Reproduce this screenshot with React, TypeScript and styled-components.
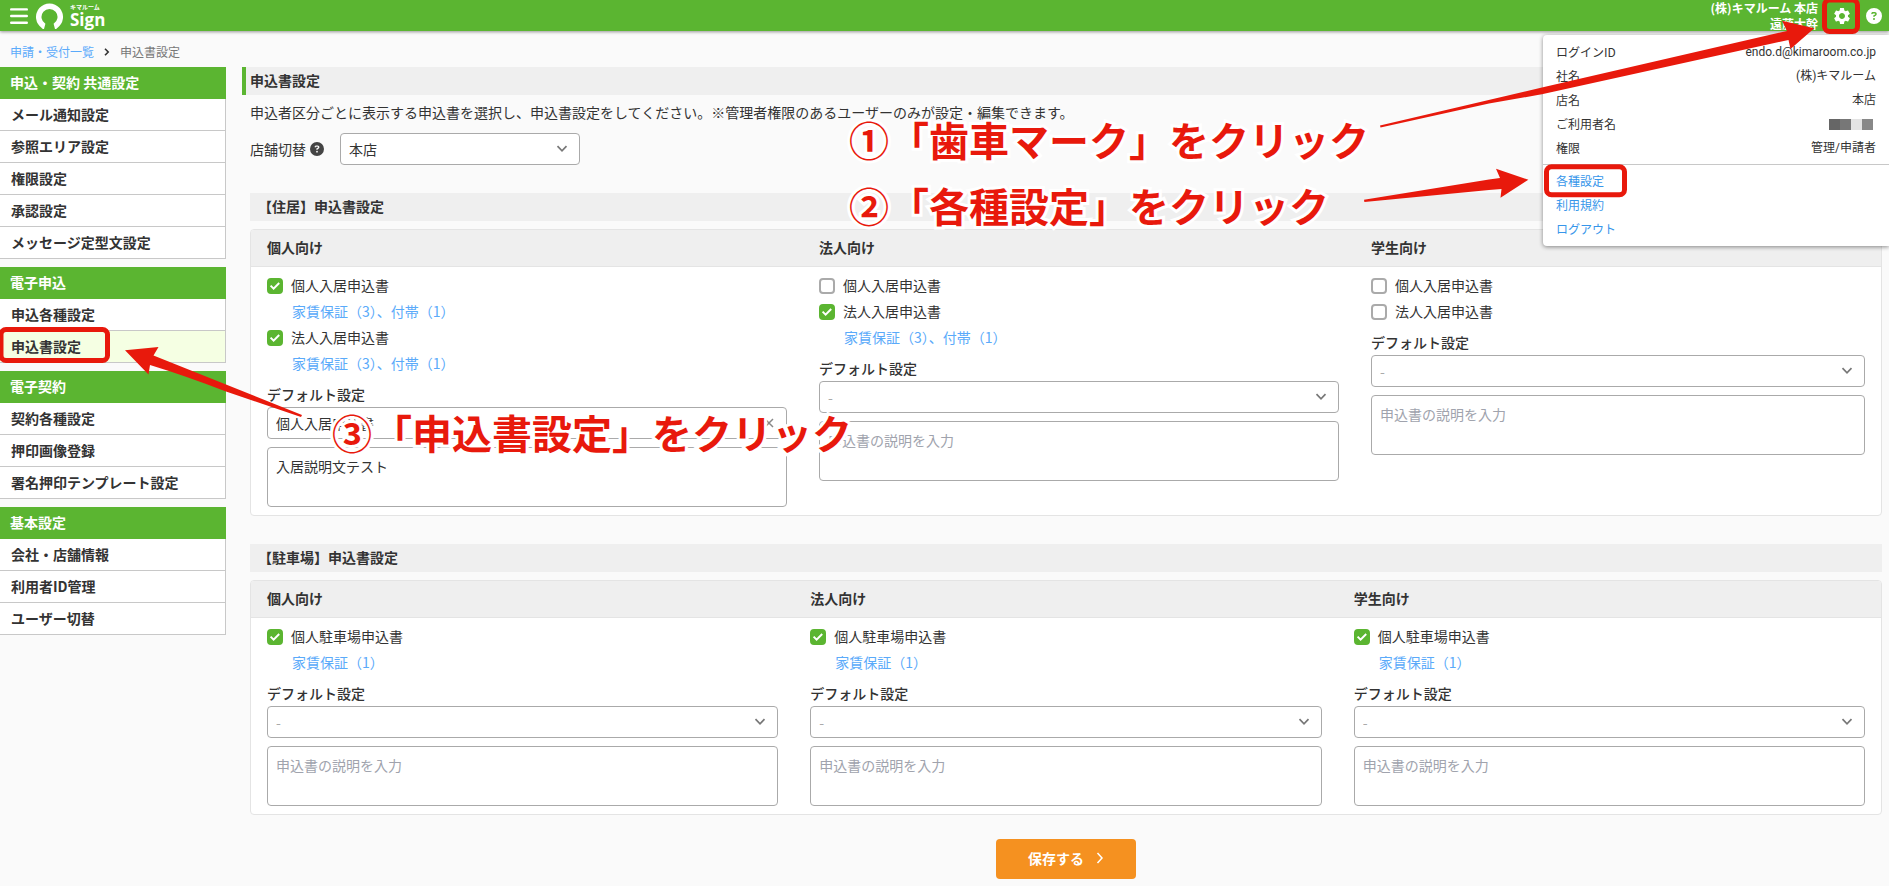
import React, { useId, useState } from "react";
import styled, { createGlobalStyle, css } from "styled-components";
import { MdSettings } from "react-icons/md";
import { FaCircleQuestion } from "react-icons/fa6";

const color = {
  green: "#5bb531",
  red: "#e8190c",
  text: "#333",
  bar: "#efefef",
  page: "#fafafa",
  line: "#c8c8c8",
  card: "#e4e4e4",
  field: "#aaa",
  link: "#5aaafa",
};

const GlobalStyle = createGlobalStyle`
  *, *::before, *::after { box-sizing: border-box; }
  body {
    margin: 0;
    background: ${color.page};
    color: ${color.text};
    font: 14px/20px "Noto Sans CJK JP", "Noto Sans", sans-serif;
  }
  button, select, textarea, input { font: inherit; color: inherit; margin: 0; }
  a { text-decoration: none; }
  h1, h2, h3, ul, dl, dd, p { margin: 0; padding: 0; }
  ul { list-style: none; }
`;

const Page = styled.div`
  position: relative;
  min-height: 100vh;
  overflow: hidden;
`;

/* ---------- header ---------- */
const Header = styled.header`
  position: relative;
  display: flex;
  align-items: center;
  height: 31px;
  padding: 0 7px 0 10px;
  background: ${color.green};
  color: #fff;
  box-shadow: 0 1px 3px rgba(0, 0, 0, 0.4);
`;

const IconButton = styled.button`
  display: flex;
  align-items: center;
  justify-content: center;
  padding: 0;
  border: 0;
  background: none;
  color: #fff;
`;

const LogoLink = styled.a`
  display: flex;
  align-items: center;
  gap: 7px;
  margin-left: 8px;
  color: #fff;
`;

const LogoText = styled.span`
  display: flex;
  flex-direction: column;
  font-weight: 700;
`;

const LogoKana = styled.span`
  font-size: 6px;
  line-height: 9px;
`;

const LogoName = styled.span`
  font: 700 17px/18px "Open Sans", sans-serif;
`;

const Account = styled.p`
  margin-left: auto;
  margin-right: 14px;
  text-align: right;
  font-size: 12px;
  line-height: 16px;
  font-weight: 700;
`;

const HeaderTools = styled.div`
  display: flex;
  align-items: center;
  gap: 14px;
`;

/* ---------- account menu ---------- */
const Menu = styled.div`
  position: absolute;
  top: 35px;
  right: 0;
  width: 346px;
  padding: 5px 0;
  background: #fff;
  border-radius: 4px 0 0 4px;
  box-shadow: 0 1px 4px rgba(0, 0, 0, 0.45);
  font-size: 12px;
  line-height: 24px;
`;

const MenuRow = styled.div`
  display: flex;
  justify-content: space-between;
  align-items: center;
  padding: 0 13px;
`;

const MenuValue = styled.dd`
  font-family: Roboto, "Noto Sans CJK JP", sans-serif;
`;

const Mosaic = styled.dd`
  display: flex;
  padding-right: 3px;
`;

const MosaicBlock = styled.span<{ $tone: string }>`
  width: 11px;
  height: 11px;
  background: ${(p) => p.$tone};
`;

const MenuLinks = styled.ul`
  margin-top: 4px;
  padding: 4px 13px 0;
  border-top: 1px solid ${color.line};
  a { color: #3796ea; }
`;

/* ---------- breadcrumb ---------- */
const Breadcrumb = styled.nav`
  display: flex;
  align-items: center;
  gap: 10px;
  height: 36px;
  padding: 5px 10px 0;
  font-size: 12px;
  color: #777;
  a { color: ${color.link}; }
`;

/* ---------- layout ---------- */
const Columns = styled.div`
  display: flex;
  align-items: flex-start;
  gap: 16px;
`;

const Sidebar = styled.nav`
  display: flex;
  flex-direction: column;
  gap: 8px;
  flex: 0 0 226px;
`;

const NavHeading = styled.h2`
  padding: 0 10px 2px;
  background: ${color.green};
  color: #fff;
  font-size: 14px;
  line-height: 30px;
  font-weight: 700;
`;

const NavLink = styled.a<{ $active?: boolean }>`
  display: block;
  padding: 0 11px;
  border: solid ${color.line};
  border-width: 0 1px 1px 0;
  background: ${(p) => (p.$active ? "#f5ffe3" : "#fff")};
  color: ${color.text};
  line-height: 31px;
  font-weight: 700;
`;

const Main = styled.main`
  flex: 1;
  min-width: 0;
  padding-right: 7px;
`;

const PageTitle = styled.h1`
  padding: 0 4px 2px;
  border-left: 4px solid ${color.green};
  background: ${color.bar};
  font-size: 14px;
  line-height: 26px;
  font-weight: 700;
`;

const Content = styled.div`
  padding: 7px 0 7px 8px;
`;

const StoreRow = styled.div`
  display: flex;
  align-items: center;
  gap: 4px;
  margin-top: 11px;
  svg { color: #444; }
`;

const StoreField = styled.div`
  width: 240px;
  margin-left: 12px;
`;

const SectionTitle = styled.h2`
  margin-top: 28px;
  padding: 0 8px 2px;
  background: ${color.bar};
  font-size: 14px;
  line-height: 26px;
  font-weight: 700;
`;

const Card = styled.div`
  margin-top: 8px;
  border: 1px solid ${color.card};
  border-radius: 4px;
  background: #fff;
  overflow: hidden;
`;

const cardGrid = css<{ $columns: string }>`
  display: grid;
  grid-template-columns: ${(p) => p.$columns};
`;

const CardHead = styled.div<{ $columns: string }>`
  ${cardGrid}
  background: ${color.bar};
  border-bottom: 1px solid ${color.card};
`;

const CardHeading = styled.h3`
  padding: 0 16px 2px;
  font-size: 14px;
  line-height: 34px;
  font-weight: 700;
`;

const CardBody = styled.div<{ $columns: string }>`
  ${cardGrid}
  align-items: start;
`;

const Audience = styled.div`
  padding: 6px 16px 8px;
`;

/* ---------- form parts ---------- */
const CheckLabel = styled.label`
  display: flex;
  align-items: center;
  gap: 8px;
`;

const CheckText = styled.span`
  padding-bottom: 2px;
  line-height: 24px;
`;

const Tick = styled.span`
  display: grid;
  width: 16px;
  height: 16px;
  > * { grid-area: 1 / 1; }
  svg { pointer-events: none; }
`;

const TickInput = styled.input`
  appearance: none;
  width: 16px;
  height: 16px;
  border: 2px solid ${color.field};
  border-radius: 4px;
  background: #fff;
  &:checked {
    border-color: ${color.green};
    background: ${color.green};
  }
`;

const DetailLink = styled.a`
  display: block;
  padding: 0 0 2px 25px;
  color: ${color.link};
  line-height: 24px;
`;

const FieldLabel = styled.label`
  display: block;
  margin-top: 4px;
  line-height: 26px;
  font-weight: 500;
`;

const SelectBox = styled.div`
  display: grid;
  align-items: center;
  > * { grid-area: 1 / 1; }
  > svg {
    justify-self: end;
    margin-right: 12px;
    pointer-events: none;
  }
`;

const SelectInput = styled.select<{ $empty: boolean }>`
  appearance: none;
  width: 100%;
  height: 32px;
  padding: 0 32px 0 8px;
  border: 1px solid ${color.field};
  border-radius: 4px;
  background: #fff;
  color: ${(p) => (p.$empty ? "#aaa" : color.text)};
`;

const NoteInput = styled.textarea`
  display: block;
  width: 100%;
  height: 60px;
  margin-top: 8px;
  padding: 8px;
  border: 1px solid ${color.field};
  border-radius: 4px;
  background: #fff;
  resize: none;
  &::placeholder { color: #a0a3ad; opacity: 1; }
`;

const SaveButton = styled.button`
  display: flex;
  align-items: center;
  justify-content: center;
  gap: 12px;
  width: 140px;
  height: 40px;
  margin: 24px auto 0;
  padding: 0 0 2px;
  border: 0;
  border-radius: 4px;
  background: #f59120;
  color: #fff;
  font-weight: 700;
`;

/* ---------- guide marks drawn over the page ---------- */
const GuideLayer = styled.div<{ $side: "left" | "right" }>`
  position: absolute;
  top: 0;
  ${(p) => p.$side}: 0;
  width: ${(p) => (p.$side === "left" ? 870 : 1050)}px;
  height: 480px;
  pointer-events: none;
  svg { display: block; overflow: visible; }
`;

const GuideText = styled.p<{ $x: number; $y: number }>`
  position: absolute;
  left: ${(p) => p.$x}px;
  top: ${(p) => p.$y}px;
  color: ${color.red};
  font-size: 40px;
  line-height: 60px;
  font-weight: 700;
  white-space: nowrap;
  -webkit-text-stroke: 6px #fff;
  paint-order: stroke fill;
`;

function Chevron() {
  return (
    <svg width="12" height="8" viewBox="0 0 12 8" fill="none" stroke="#777" strokeWidth="1.7" aria-hidden>
      <path d="M1.5 1.2 6 5.8l4.5-4.6" />
    </svg>
  );
}

function Cross() {
  return (
    <svg width="12" height="12" viewBox="0 0 12 12" fill="none" stroke="#888" strokeWidth="1.5" aria-hidden>
      <path d="m2 2 8 8m0-8-8 8" />
    </svg>
  );
}

interface SelectProps {
  id: string;
  value?: string;
  clearable?: boolean;
}

function Select({ id, value = "-", clearable }: SelectProps) {
  return (
    <SelectBox>
      <SelectInput id={id} $empty={value === "-"} defaultValue={value}>
        <option>{value}</option>
      </SelectInput>
      {clearable ? <Cross /> : <Chevron />}
    </SelectBox>
  );
}

interface CheckData {
  label: string;
  checked?: boolean;
  detail?: string;
}

function Check({ label, checked = false, detail }: CheckData) {
  const [on, setOn] = useState(checked);
  return (
    <>
      <CheckLabel>
        <Tick>
          <TickInput type="checkbox" checked={on} onChange={() => setOn(!on)} />
          {on && (
            <svg width="16" height="16" viewBox="0 0 16 16" fill="none" stroke="#fff" strokeWidth="2" aria-hidden>
              <path d="m3.600 7.600 3 3 5.600-5.600" />
            </svg>
          )}
        </Tick>
        <CheckText>{label}</CheckText>
      </CheckLabel>
      {detail && <DetailLink href="#detail">{detail}</DetailLink>}
    </>
  );
}

interface AudienceData {
  title: string;
  checks: CheckData[];
  form?: string;
  note?: string;
}

function AudienceForm({ title, checks, form, note }: AudienceData) {
  const id = useId();
  return (
    <Audience>
      {checks.map((c) => (
        <Check key={c.label} {...c} />
      ))}
      <FieldLabel htmlFor={id}>デフォルト設定</FieldLabel>
      <Select id={id} value={form} clearable={Boolean(form)} />
      <NoteInput aria-label={`${title} 申込書の説明`} placeholder="申込書の説明を入力" defaultValue={note} />
    </Audience>
  );
}

interface GroupProps {
  title: string;
  columns: string;
  items: AudienceData[];
}

function FormGroup({ title, columns, items }: GroupProps) {
  return (
    <section>
      <SectionTitle>{title}</SectionTitle>
      <Card>
        <CardHead $columns={columns}>
          {items.map((i) => (
            <CardHeading key={i.title}>{i.title}</CardHeading>
          ))}
        </CardHead>
        <CardBody $columns={columns}>
          {items.map((i) => (
            <AudienceForm key={i.title} {...i} />
          ))}
        </CardBody>
      </Card>
    </section>
  );
}

const both = "家賃保証（3）、付帯（1）";

const residence: AudienceData[] = [
  {
    title: "個人向け",
    checks: [
      { label: "個人入居申込書", checked: true, detail: both },
      { label: "法人入居申込書", checked: true, detail: both },
    ],
    form: "個人入居申込書",
    note: "入居説明文テスト",
  },
  {
    title: "法人向け",
    checks: [{ label: "個人入居申込書" }, { label: "法人入居申込書", checked: true, detail: both }],
  },
  { title: "学生向け", checks: [{ label: "個人入居申込書" }, { label: "法人入居申込書" }] },
];

const parking: AudienceData[] = ["個人向け", "法人向け", "学生向け"].map((title) => ({
  title,
  checks: [{ label: "個人駐車場申込書", checked: true, detail: "家賃保証（1）" }],
}));

const navigation = [
  {
    title: "申込・契約 共通設定",
    links: ["メール通知設定", "参照エリア設定", "権限設定", "承認設定", "メッセージ定型文設定"],
  },
  { title: "電子申込", links: ["申込各種設定", "申込書設定"] },
  { title: "電子契約", links: ["契約各種設定", "押印画像登録", "署名押印テンプレート設定"] },
  { title: "基本設定", links: ["会社・店舗情報", "利用者ID管理", "ユーザー切替"] },
];

const account = [
  ["ログインID", "endo.d@kimaroom.co.jp"],
  ["社名", "(株)キマルーム"],
  ["店名", "本店"],
  ["ご利用者名", ""],
  ["権限", "管理/申請者"],
];

function AccountMenu() {
  return (
    <Menu>
      <dl>
        {account.map(([term, value]) => (
          <MenuRow key={term}>
            <dt>{term}</dt>
            {value ? (
              <MenuValue>{value}</MenuValue>
            ) : (
              <Mosaic>
                {["#666", "#777", "#e3e3e3", "#888"].map((tone) => (
                  <MosaicBlock key={tone} $tone={tone} />
                ))}
              </Mosaic>
            )}
          </MenuRow>
        ))}
      </dl>
      <MenuLinks>
        {["各種設定", "利用規約", "ログアウト"].map((l) => (
          <li key={l}>
            <a href="#menu">{l}</a>
          </li>
        ))}
      </MenuLinks>
    </Menu>
  );
}

function Guides() {
  return (
    <>
      <GuideLayer $side="left">
        <svg width="870" height="480" viewBox="0 0 870 480" aria-hidden>
          <rect x="1" y="329.5" width="106.5" height="31" rx="5" fill="none" stroke={color.red} strokeWidth="5" />
          <path fill={color.red} d="M125 350.3 158.5 347 153.5 355.5 302 415 301 417 226 391.5Q186 376 150 365L148.5 374.5Z" />
        </svg>
        <GuideText $x={332} $y={402}>③「申込書設定」をクリック</GuideText>
      </GuideLayer>
      <GuideLayer $side="right">
        <svg width="1050" height="480" viewBox="839 0 1050 480" aria-hidden>
          <rect x="1824.5" y="0" width="33" height="31.5" rx="5" fill="none" stroke={color.red} strokeWidth="5" />
          <rect x="1546.5" y="166.8" width="78" height="28" rx="5" fill="none" stroke={color.red} strokeWidth="5" />
          <path fill={color.red} d="M1380 125.4 1543 87.3 1787 31 1782 20.7 1814.3 28.3 1790.5 49 1788.5 40 1543 94 1489 103.6 1380.5 127.4Z" />
          <path fill={color.red} d="M1364 199.8 1489 179.5 1500 178 1496 168.8 1528.4 179.7 1500.5 197.8 1501.5 189 1489 190 1364.4 202Z" />
        </svg>
        <GuideText $x={10} $y={109}>①「歯車マーク」をクリック</GuideText>
        <GuideText $x={10} $y={175}>②「各種設定」をクリック</GuideText>
      </GuideLayer>
    </>
  );
}

export default function App() {
  return (
    <Page>
      <GlobalStyle />
      <Header>
        <IconButton aria-label="メニュー">
          <svg width="18" height="18" viewBox="0 0 18 18" stroke="#fff" strokeWidth="2.4" strokeLinecap="round" aria-hidden>
            <path d="M1.200 2.400h15.600M1.200 9h15.600M1.200 15.700h15.600" />
          </svg>
        </IconButton>
        <LogoLink href="#home">
          <svg width="27" height="28" viewBox="0 0 27 28" aria-hidden>
            <path
              fill="#fff"
              d="M8 27Q7 27.300 6 26.200A13.5 13.5 0 1 1 21 26.200Q20 27.300 19 27L17.600 21.800A8 8 0 1 0 9.400 21.800Z"
            />
          </svg>
          <LogoText>
            <LogoKana>キマルーム</LogoKana>
            <LogoName>Sign</LogoName>
          </LogoText>
        </LogoLink>
        <Account>
          (株)キマルーム 本店
          <br />
          遠藤大幹
        </Account>
        <HeaderTools>
          <IconButton aria-label="設定">
            <MdSettings size={20} />
          </IconButton>
          <IconButton aria-label="ヘルプ">
            <FaCircleQuestion size={16} />
          </IconButton>
        </HeaderTools>
      </Header>
      <Breadcrumb aria-label="パンくず">
        <a href="#list">申請・受付一覧</a>
        <svg width="6" height="8" viewBox="0 0 6 8" fill="none" stroke="#333" strokeWidth="1.6" aria-hidden>
          <path d="m1 .8 3.200 3.200L1 7.200" />
        </svg>
        <span>申込書設定</span>
      </Breadcrumb>
      <Columns>
        <Sidebar aria-label="設定">
          {navigation.map((group) => (
            <section key={group.title}>
              <NavHeading>{group.title}</NavHeading>
              <ul>
                {group.links.map((l) => (
                  <li key={l}>
                    <NavLink href="#settings" $active={l === "申込書設定"}>
                      {l}
                    </NavLink>
                  </li>
                ))}
              </ul>
            </section>
          ))}
        </Sidebar>
        <Main>
          <PageTitle>申込書設定</PageTitle>
          <Content>
            <p>
              申込者区分ごとに表示する申込書を選択し、申込書設定をしてください。※管理者権限のあるユーザーのみが設定・編集できます。
            </p>
            <StoreRow>
              <label htmlFor="store">店舗切替</label>
              <FaCircleQuestion size={14} aria-hidden />
              <StoreField>
                <Select id="store" value="本店" />
              </StoreField>
            </StoreRow>
            <FormGroup title="【住居】申込書設定" columns="552fr 552fr 526fr" items={residence} />
            <FormGroup title="【駐車場】申込書設定" columns="1fr 1fr 1fr" items={parking} />
            <SaveButton type="submit">
              保存する
              <svg width="8" height="12" viewBox="0 0 8 12" fill="none" stroke="#fff" strokeWidth="1.5" aria-hidden>
                <path d="m1.500 1 4.500 5-4.500 5" />
              </svg>
            </SaveButton>
          </Content>
        </Main>
      </Columns>
      <AccountMenu />
      <Guides />
    </Page>
  );
}
